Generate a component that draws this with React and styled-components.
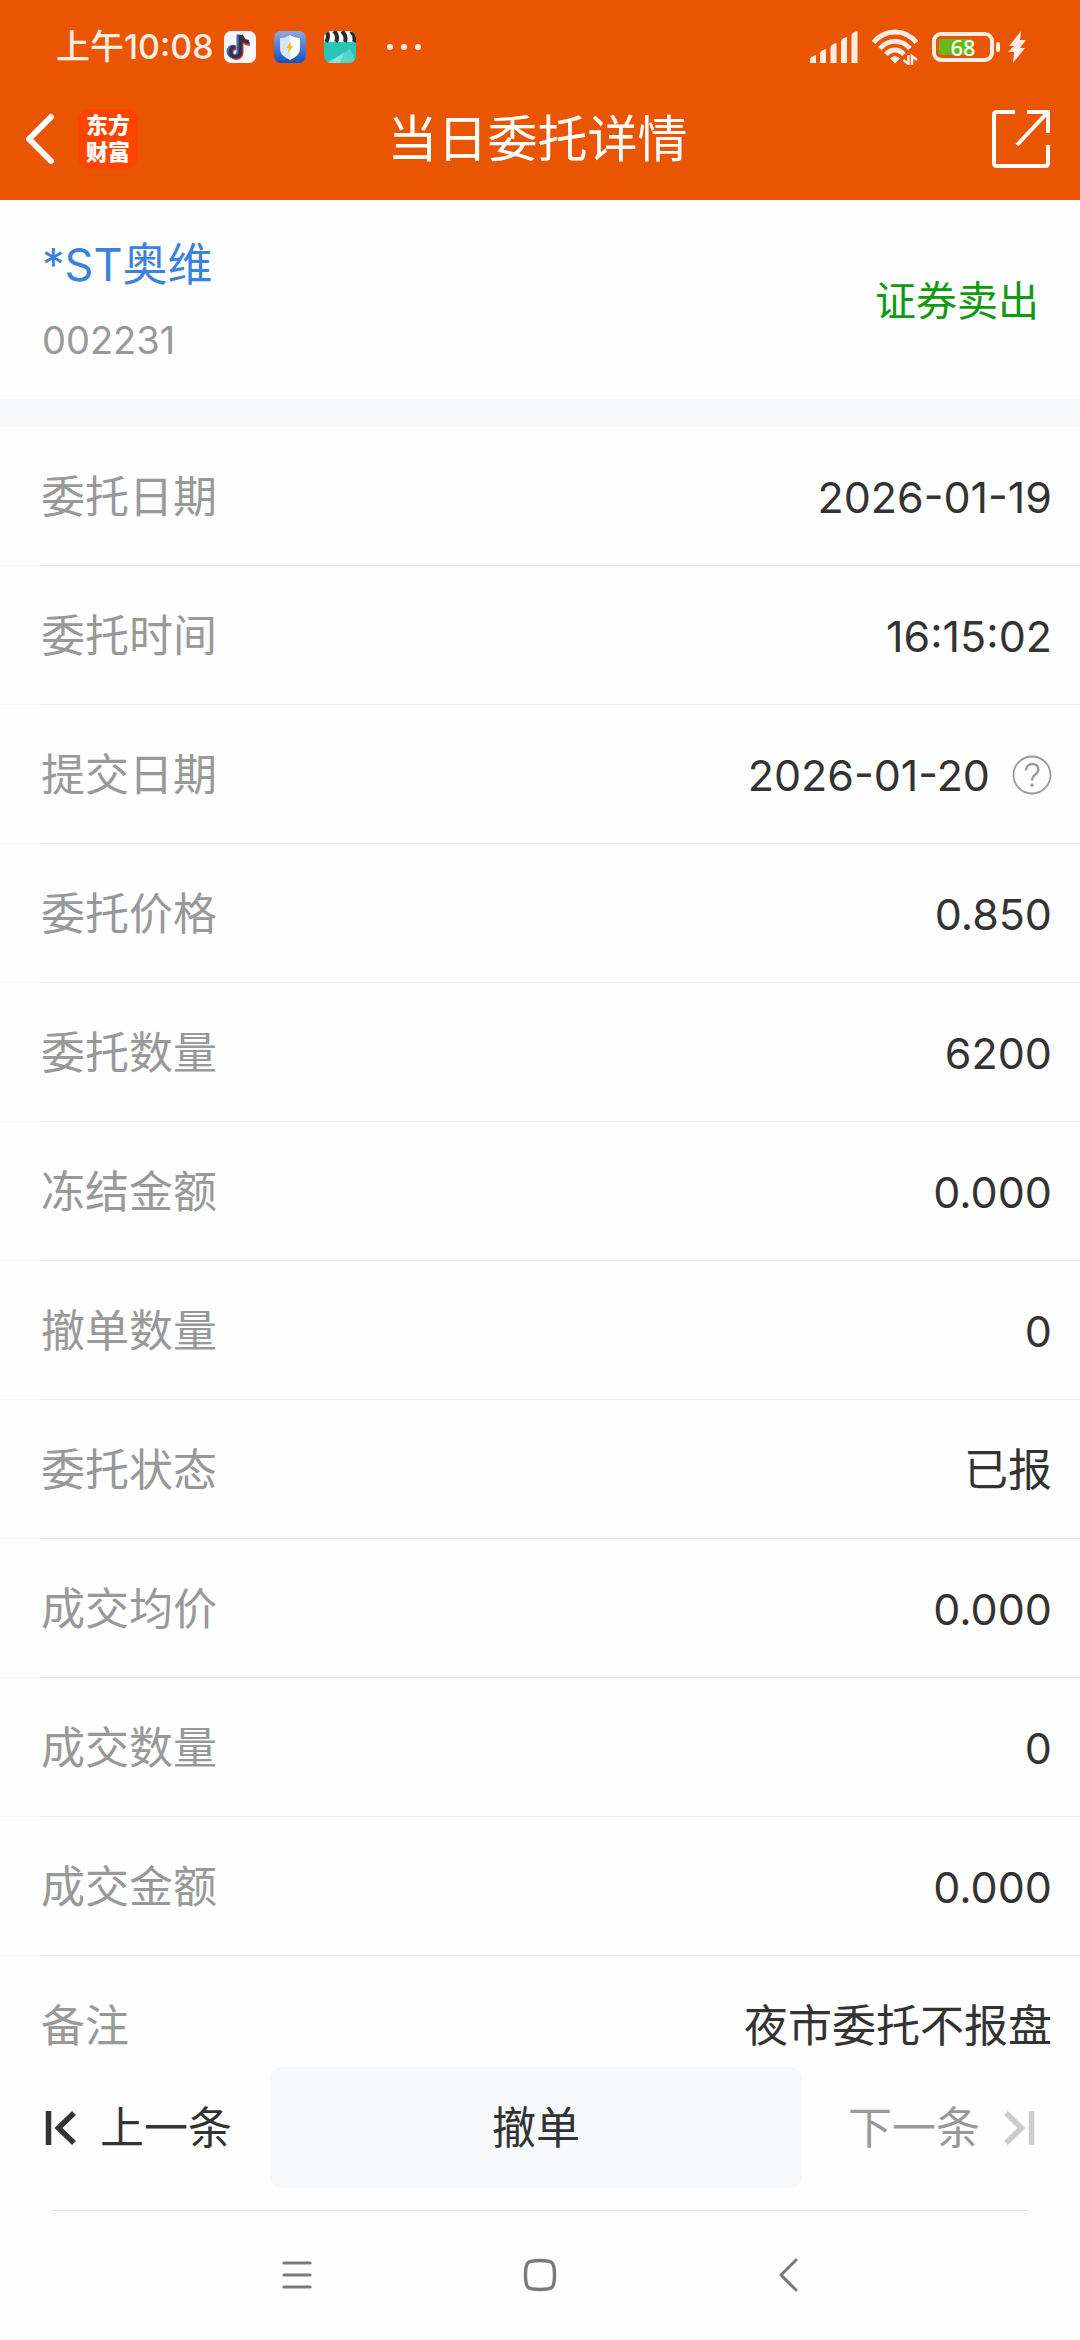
import React from "react";
import styled, { createGlobalStyle } from "styled-components";

const GlobalStyle = createGlobalStyle`
  *, *::before, *::after { box-sizing: border-box; }
  body {
    margin: 0;
    background: #fefefe;
    color: #333333;
    font-family: Inter, "Noto Sans CJK SC", sans-serif;
  }
  button {
    margin: 0;
    padding: 0;
    border: 0;
    background: none;
    color: inherit;
    font: inherit;
    cursor: pointer;
  }
  svg { display: block; flex: none; }
`;

const Screen = styled.div`
  display: flex;
  flex-direction: column;
  height: 100vh;
`;

const Header = styled.header`
  flex: none;
  background: #ea5504;
  color: #ffffff;
`;

const StatusBar = styled.div`
  display: flex;
  align-items: center;
  justify-content: space-between;
  height: 80px;
  padding: 14px 54px 0 56px;
  color: #ffece2;
`;

const StatusGroup = styled.div`
  display: flex;
  align-items: center;
  gap: ${(p) => p.$gap}px;
`;

const Clock = styled.time`
  font-size: 34px;
  line-height: 40px;
  font-weight: 500;
`;

const Battery = styled.div`
  display: flex;
  align-items: center;
  gap: 2px;
`;

const BatteryShell = styled.div`
  display: flex;
  align-items: center;
  justify-content: center;
  width: 62px;
  height: 30px;
  border: 4px solid #ffece2;
  border-radius: 9px;
  padding: 3px;
`;

const BatteryLevel = styled.div`
  display: flex;
  align-items: center;
  justify-content: center;
  width: 100%;
  height: 16px;
  border-radius: 3px;
  background: linear-gradient(to right, #66bb16 68%, transparent 68%);
  font-size: 22px;
  line-height: 16px;
  font-weight: 500;
  font-family: "Noto Sans", sans-serif;
  color: #ffffff;
`;

const BatteryTip = styled.div`
  width: 4px;
  height: 10px;
  border-radius: 2px;
  background: #ffece2;
`;

const TitleBar = styled.div`
  display: grid;
  grid-template-columns: 1fr auto 1fr;
  align-items: center;
  height: 120px;
  padding: 0 29px 2px 24px;
`;

const BarStart = styled.div`
  display: flex;
  align-items: center;
  gap: 22px;
`;

const BarEnd = styled.div`
  display: flex;
  justify-content: flex-end;
`;

const Brand = styled.span`
  display: grid;
  place-content: center;
  width: 60px;
  height: 60px;
  border-radius: 12px;
  background: #ff4400;
  font-size: 22px;
  line-height: 27px;
  font-weight: 900;
  text-align: center;
`;

const Title = styled.h1`
  margin: 0;
  font-size: 50px;
  line-height: 60px;
  font-weight: 400;
`;

const Content = styled.main`
  flex: 1;
  min-height: 0;
  overflow-y: auto;
  scrollbar-width: none;
`;

const Summary = styled.section`
  display: flex;
  align-items: center;
  justify-content: space-between;
  height: 199px;
  padding: 2px 41px 0 42px;
`;

const Stock = styled.div`
  display: flex;
  flex-direction: column;
  gap: 18px;
`;

const StockName = styled.a`
  color: #3b82d9;
  font-size: 45px;
  line-height: 60px;
  text-decoration: none;
`;

const StockCode = styled.span`
  color: #999999;
  font-size: 38px;
  line-height: 54px;
`;

const Side = styled.span`
  color: #109a10;
  font-size: 41px;
  line-height: 60px;
`;

const Details = styled.dl`
  margin: 0;
  border-top: 28px solid #f6f8fa;
`;

const Row = styled.div`
  display: flex;
  align-items: center;
  justify-content: space-between;
  height: 139px;
  padding: 2px 28px 0 41px;
  border-bottom: 1px solid;
  border-image: linear-gradient(to right, #f8f8f8 41px, #ebebeb 41px) 1;
`;

const Label = styled.dt`
  color: #999999;
  font-size: 44px;
  line-height: 60px;
`;

const Value = styled.dd`
  display: flex;
  align-items: center;
  gap: 22px;
  margin: 0;
  font-size: ${(p) => (p.$numeric ? 43 : 44)}px;
  line-height: 60px;
`;

const Footer = styled.footer`
  flex: none;
  background: #fefefe;
`;

const Actions = styled.div`
  display: flex;
  align-items: center;
  padding: 0 45px;
`;

const StepButton = styled.button`
  display: flex;
  align-items: center;
  gap: 23px;
  font-size: 44px;
  line-height: 60px;
  color: ${(p) => (p.disabled ? "#999999" : "#333333")};
`;

const CancelButton = styled.button`
  flex: 1;
  height: 121px;
  margin: 0 46px 0 38px;
  border-radius: 11px;
  background: #f7f8fa;
  font-size: 44px;
  line-height: 60px;
`;

const Rule = styled.hr`
  margin: 22px 52px 0;
  border: 0;
  border-top: 1px solid #e2e2e2;
`;

const SystemNav = styled.nav`
  display: grid;
  grid-template-columns: 1fr auto 1fr;
  align-items: center;
  height: 129px;
  padding: 0 282px 2px;

  & > :last-child { justify-self: end; }
  & > :first-child { justify-self: start; }
`;

const rows = [
  { label: "委托日期", value: "2026-01-19", numeric: true },
  { label: "委托时间", value: "16:15:02", numeric: true },
  { label: "提交日期", value: "2026-01-20", numeric: true, help: true },
  { label: "委托价格", value: "0.850", numeric: true },
  { label: "委托数量", value: "6200", numeric: true },
  { label: "冻结金额", value: "0.000", numeric: true },
  { label: "撤单数量", value: "0", numeric: true },
  { label: "委托状态", value: "已报" },
  { label: "成交均价", value: "0.000", numeric: true },
  { label: "成交数量", value: "0", numeric: true },
  { label: "成交金额", value: "0.000", numeric: true },
  { label: "备注", value: "夜市委托不报盘" },
];

const MusicAppIcon = () => (
  <svg width="32" height="32" viewBox="0 0 32 32">
    <rect width="32" height="32" rx="7" fill="#f7f7f9" />
    <g fill="none" strokeWidth="4">
      <path d="M15.5 4v17a5 5 0 1 1-5-5" stroke="#3a6fd0" transform="translate(-1 -.5)" />
      <path d="M16.5 4v17a5 5 0 1 1-5-5M17 5c1 5 4 7 8 7" stroke="#e8404c" transform="translate(1 1)" />
      <path d="M16.5 4v17a5 5 0 1 1-5-5M17 4c1 5 4 7 8 7" stroke="#34343f" />
    </g>
  </svg>
);

const ShieldAppIcon = () => (
  <svg width="32" height="32" viewBox="0 0 32 32">
    <defs>
      <linearGradient id="shieldSky" x1="0" y1="0" x2="0" y2="1">
        <stop offset="0" stopColor="#8fa9e4" />
        <stop offset="1" stopColor="#1450be" />
      </linearGradient>
    </defs>
    <rect width="32" height="32" rx="7" fill="url(#shieldSky)" />
    <path d="M16 4c3 2 6 3 10 3v10c0 6-4 9-10 12z" fill="#ffffff" />
    <path d="M16 4c-3 2-6 3-10 3v10c0 6 4 9 10 12z" fill="#dbe4f7" />
    <path d="M17 11l-5 6h3l-1 5 5.500-7h-3z" fill="#f5b921" />
  </svg>
);

const ClapperAppIcon = () => (
  <svg width="32" height="32" viewBox="0 0 32 32">
    <defs>
      <clipPath id="clapperEdge"><rect width="32" height="32" rx="7" /></clipPath>
    </defs>
    <g clipPath="url(#clapperEdge)">
      <rect width="32" height="32" fill="#2bc5b8" />
      <path d="M3 32L26 18 32 32z" fill="#59d3ca" />
      <path d="M3 32l17-10-4 10z" fill="#8be0d8" />
      <rect width="32" height="11" fill="#ffffff" />
      <path d="M2 0q4 5 0 11M10 0q5 5 2 11M18 0q5 5 3 11M27 0q5 5 3 11" fill="none" stroke="#2b2b2b" strokeWidth="4" />
    </g>
  </svg>
);

const MoreDots = () => (
  <svg width="52" height="32" viewBox="0 0 52 32" fill="#ffece2">
    <circle cx="16" cy="16" r="3" />
    <circle cx="30" cy="16" r="3" />
    <circle cx="44" cy="16" r="3" />
  </svg>
);

const SignalIcon = () => (
  <svg width="48" height="32" viewBox="0 0 48 32" fill="#ffece2">
    <path d="M0 28q0-2 6-4v8H0zM10 22q1-3 6-4v14h-6zM20.500 16q1-3 6-4v20h-6zM31 10q1-3 6-4v26h-6zM41.500 4q1-3 6-4v32h-6z" />
  </svg>
);

const WifiIcon = () => (
  <svg width="46" height="36" viewBox="0 0 46 36" fill="none" stroke="#ffece2" strokeWidth="4.800">
    <path d="M1.500 13.500C13-.5 33-.5 44.500 13.500M8 19.500c8-9.500 22-9.500 30 0M14 25.500c5-6 13-6 18 0" />
    <path d="M23 34.500l-5-5q5-5 10 0z" fill="#ffece2" stroke="none" />
    <path d="M36.500 26v9l-5-4M40 36v-9l5 4" strokeWidth="2.500" />
  </svg>
);

const BoltIcon = () => (
  <svg width="18" height="32" viewBox="0 0 18 32" fill="#ffece2">
    <path d="M13 0L1 15h5l-6 6h6L5 32l12-15h-5l6-8h-6z" />
  </svg>
);

const BackIcon = () => (
  <svg width="32" height="52" viewBox="0 0 32 52" fill="none" stroke="#ffffff" strokeWidth="6" strokeLinecap="round" strokeLinejoin="round">
    <path d="M27 4L5 26l22 22" />
  </svg>
);

const ShareIcon = () => (
  <svg width="60" height="60" viewBox="0 0 60 60" fill="none" stroke="#ffffff" strokeWidth="4">
    <path d="M24 3H6Q3 3 3 6v48q0 3 3 3h48q3 0 3-3V36M36 3h21v21M57 3L26 36" />
  </svg>
);

const HelpIcon = () => (
  <svg width="40" height="40" viewBox="0 0 40 40" fill="none" stroke="#999999">
    <circle cx="20" cy="20" r="18.500" strokeWidth="1.800" />
    <path d="M14 15.500c0-8.500 12.500-8.500 12.500-1 0 5-6.500 5-6.500 11" strokeWidth="2.400" />
    <circle cx="20" cy="30" r="1.800" fill="#999999" stroke="none" />
  </svg>
);

const StepIcon = ({ color, forward }) => (
  <svg width="32" height="34" viewBox="0 0 32 34" fill="none" stroke={color} strokeWidth="5.500">
    {forward ? <path d="M28.500 0v34M3 2l15.500 15L3 32" /> : <path d="M3.500 0v34M29 2L13.500 17 29 32" />}
  </svg>
);

const MenuIcon = () => (
  <svg width="30" height="34" viewBox="0 0 30 34" stroke="#7a7a7a" strokeWidth="3.200" strokeLinecap="round">
    <path d="M2 5h26M2 17h26M2 29h26" />
  </svg>
);

const HomeIcon = () => (
  <svg width="34" height="34" viewBox="0 0 34 34" fill="none" stroke="#7a7a7a" strokeWidth="3.400">
    <path d="M17 2.500c12.500 0 14.500 1 14.500 14.500S29.500 31.500 17 31.500 2.500 30.500 2.500 17 4.500 2.500 17 2.500z" />
  </svg>
);

const NavBackIcon = () => (
  <svg width="20" height="34" viewBox="0 0 20 34" fill="none" stroke="#7a7a7a" strokeWidth="3" strokeLinecap="round" strokeLinejoin="round">
    <path d="M18 2L3 17l15 15" />
  </svg>
);

export default function App() {
  return (
    <>
      <GlobalStyle />
      <Screen>
        <Header>
          <StatusBar>
            <StatusGroup $gap={10}>
              <Clock>上午10:08</Clock>
              <StatusGroup $gap={18}>
                <MusicAppIcon />
                <ShieldAppIcon />
                <ClapperAppIcon />
                <MoreDots />
              </StatusGroup>
            </StatusGroup>
            <StatusGroup $gap={8}>
              <StatusGroup $gap={14}>
                <SignalIcon />
                <WifiIcon />
                <Battery>
                  <BatteryShell>
                    <BatteryLevel>68</BatteryLevel>
                  </BatteryShell>
                  <BatteryTip />
                </Battery>
              </StatusGroup>
              <BoltIcon />
            </StatusGroup>
          </StatusBar>
          <TitleBar>
            <BarStart>
              <button type="button" aria-label="返回"><BackIcon /></button>
              <Brand>东方<br />财富</Brand>
            </BarStart>
            <Title>当日委托详情</Title>
            <BarEnd>
              <button type="button" aria-label="分享"><ShareIcon /></button>
            </BarEnd>
          </TitleBar>
        </Header>
        <Content>
          <Summary>
            <Stock>
              <StockName href="#stock">*ST奥维</StockName>
              <StockCode>002231</StockCode>
            </Stock>
            <Side>证券卖出</Side>
          </Summary>
          <Details>
            {rows.map((row) => (
              <Row key={row.label}>
                <Label>{row.label}</Label>
                <Value $numeric={row.numeric}>
                  {row.value}
                  {row.help && <button type="button" aria-label="说明"><HelpIcon /></button>}
                </Value>
              </Row>
            ))}
          </Details>
        </Content>
        <Footer>
          <Actions>
            <StepButton type="button">
              <StepIcon color="#333333" />
              上一条
            </StepButton>
            <CancelButton type="button">撤单</CancelButton>
            <StepButton type="button" disabled>
              下一条
              <StepIcon color="#cccccc" forward />
            </StepButton>
          </Actions>
          <Rule />
          <SystemNav>
            <button type="button" aria-label="最近任务"><MenuIcon /></button>
            <button type="button" aria-label="主屏幕"><HomeIcon /></button>
            <button type="button" aria-label="后退"><NavBackIcon /></button>
          </SystemNav>
        </Footer>
      </Screen>
    </>
  );
}
